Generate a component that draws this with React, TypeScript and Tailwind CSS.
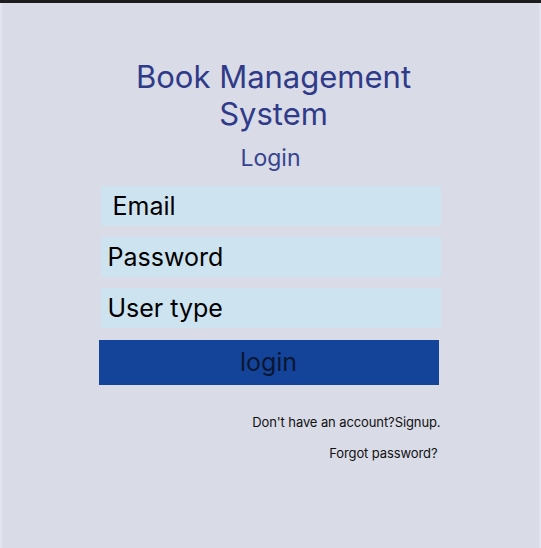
import React, { useState } from "react";

export default function App() {
  const [email, setEmail] = useState("");
  const [password, setPassword] = useState("");
  const [userType, setUserType] = useState("");

  return (
    <div className="w-[541px] h-[548px] flex flex-col bg-[#1d1d20] font-['Inter',sans-serif]">
      <div className="h-[3px]" />
      <div className="flex-1 flex flex-col items-center bg-[#d9dbe7] border-x-2 border-[#e3e5ee]">
        <h1 className="mt-[55px] ml-[6px] w-[340px] text-center text-[31px] leading-[37px] text-[#2f3a88]">
          Book Management System
        </h1>
        <h2 className="mt-[12px] text-[23px] leading-[28px] text-[#37438f]">Login</h2>

        <div className="mt-[14px] w-[340px] flex flex-col gap-[11px]">
          <input
            value={email}
            onChange={(e) => setEmail(e.target.value)}
            placeholder="Email"
            className="h-[40px] bg-[#cde4f0] pl-[12px] text-[25px] text-black placeholder:text-black outline-none"
          />
          <input
            value={password}
            onChange={(e) => setPassword(e.target.value)}
            placeholder="Password"
            type="password"
            className="h-[40px] bg-[#cde4f0] pl-[7px] text-[25px] text-black placeholder:text-black outline-none"
          />
          <input
            value={userType}
            onChange={(e) => setUserType(e.target.value)}
            placeholder="User type"
            className="h-[40px] bg-[#cde4f0] pl-[7px] text-[25px] text-black placeholder:text-black outline-none"
          />
        </div>

        <button className="mt-[12px] mr-[4px] w-[340px] h-[45px] bg-[#14449a] text-[25px] text-[#0b1633]">
          login
        </button>

        <div className="mt-[29px] w-[340px] flex flex-col items-end gap-[15px] text-[13px] leading-[16px] tracking-[-0.1px] text-[#111]">
          <a className="cursor-pointer">Don't have an account?Signup.</a>
          <a className="mr-[3px] cursor-pointer">Forgot password?</a>
        </div>
      </div>
    </div>
  );
}
